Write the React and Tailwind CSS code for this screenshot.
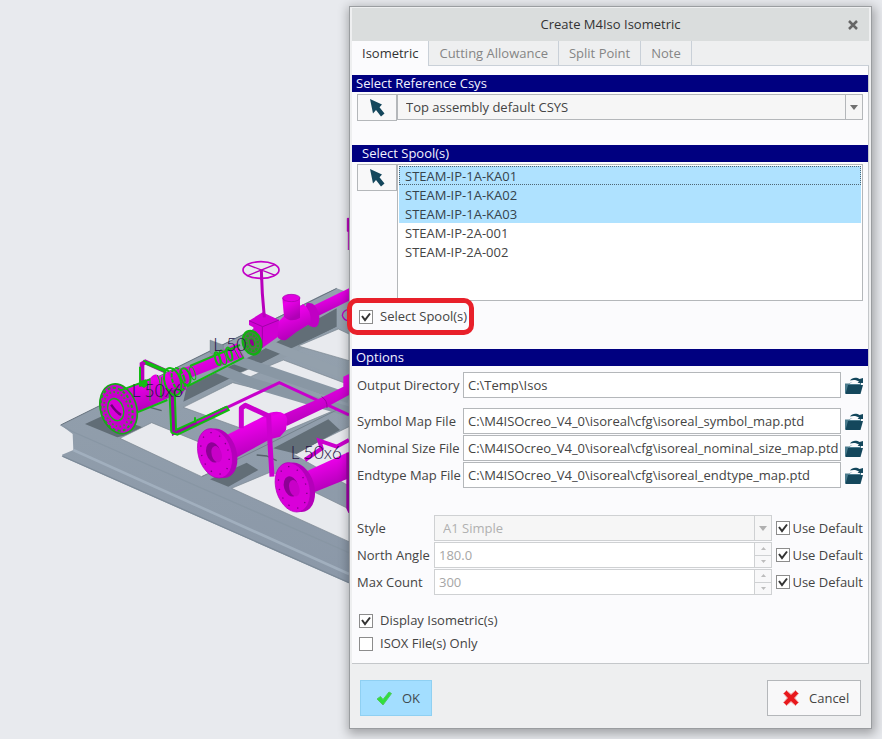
import React, { useState } from "react";

const FONT = "font-['Open_Sans','Noto_Sans',sans-serif]";

const TABS = ["Isometric", "Cutting Allowance", "Split Point", "Note"];

const SPOOLS = ["STEAM-IP-1A-KA01", "STEAM-IP-1A-KA02", "STEAM-IP-1A-KA03", "STEAM-IP-2A-001", "STEAM-IP-2A-002"];

const MAP_FILES = [
  { id: "symbol", label: "Symbol Map File", value: "C:\\M4ISOcreo_V4_0\\isoreal\\cfg\\isoreal_symbol_map.ptd" },
  { id: "nominal", label: "Nominal Size File", value: "C:\\M4ISOcreo_V4_0\\isoreal\\cfg\\isoreal_nominal_size_map.ptd" },
  { id: "endtype", label: "Endtype Map File", value: "C:\\M4ISOcreo_V4_0\\isoreal\\cfg\\isoreal_endtype_map.ptd" },
];

function ArrowIcon() {
  return (
    <svg width="15" height="18" viewBox="0 0 15 18" fill="#14475c" aria-hidden="true">
      <path d="M0 0l12 5.500-2.500 2.800 5 6.200-3.500 3-5-6.500-3 3.500z" />
    </svg>
  );
}

function FolderIcon() {
  return (
    <svg width="18" height="17" viewBox="0 0 18 17" aria-hidden="true">
      <path d="M0 6.500h4.500L6 5h10v3L4 9 1.500 16.500H0z" fill="#4c7c8e" />
      <path d="M5.500 5.500L14 3.500l1 3.500H5z" fill="#fbfbfd" />
      <path d="M3 8h15l-2.500 9H0.500z" fill="#14475c" />
      <path d="M5 3.500C7 0 12 0 14.500 2L18 1v5h-5.500l1.500-1.500C12 2.800 8 2.500 5 3.500z" fill="#14475c" />
    </svg>
  );
}

function Triangle({ up, className }) {
  return (
    <svg width="8" height="5" viewBox="0 0 8 5" fill="currentColor" className={className} aria-hidden="true">
      <path d={up ? "M0 5h8L4 0z" : "M0 0h8L4 5z"} />
    </svg>
  );
}

function Check({ label, defaultChecked, gap }) {
  return (
    <label className={`flex items-center whitespace-nowrap ${gap}`}>
      <span className="grid shrink-0">
        <input type="checkbox" defaultChecked={defaultChecked} className="peer col-start-1 row-start-1 size-[14px] appearance-none border border-[#8c8c8c] bg-white" />
        <svg viewBox="0 0 14 14" className="pointer-events-none invisible col-start-1 row-start-1 size-[14px] peer-checked:visible" aria-hidden="true">
          <path d="M3 6L6 10L11 3.500" fill="none" stroke="#333" strokeWidth="2" />
        </svg>
      </span>
      <span>{label}</span>
    </label>
  );
}

function SectionBar({ children, className = "px-1" }) {
  return <h2 className={`h-[17px] bg-[#000080] leading-[17px] text-[#f2f2ff] ${className}`}>{children}</h2>;
}

function PickButton({ label }) {
  return (
    <button type="button" aria-label={label} className="flex h-[27px] w-10 shrink-0 items-center justify-center border border-[#b4b7ba] bg-[#f8f8f9]">
      <ArrowIcon />
    </button>
  );
}

function FileRow({ id, label, value }) {
  return (
    <div className="flex items-center">
      <label htmlFor={id} className="w-[106px] shrink-0 whitespace-nowrap">{label}</label>
      <input id={id} type="text" defaultValue={value} className="h-[26px] min-w-0 flex-1 border border-[#b4b7ba] bg-white pl-1 outline-none" />
      <button type="button" aria-label={`Browse ${label}`} className="ml-1 shrink-0"><FolderIcon /></button>
    </div>
  );
}

function NumberRow({ id, label, value }) {
  return (
    <div className="flex items-center">
      <label htmlFor={id} className="w-[77px] shrink-0 whitespace-nowrap">{label}</label>
      <div className="flex h-[26px] min-w-0 flex-1 border border-[#cfd1d3] bg-white">
        <input id={id} type="text" disabled defaultValue={value} className="min-w-0 flex-1 px-1 text-[#a6a6a6]" />
        <div className="flex w-[17px] flex-col divide-y divide-[#cfd1d3] border-l border-[#cfd1d3] bg-[#f8f8f9] text-[#bdbdbd]">
          <button type="button" disabled aria-label={`Increase ${label}`} className="flex flex-1 items-center justify-center"><Triangle up className="w-[5px]" /></button>
          <button type="button" disabled aria-label={`Decrease ${label}`} className="flex flex-1 items-center justify-center"><Triangle className="w-[5px]" /></button>
        </div>
      </div>
      <div className="ml-1"><Check label="Use Default" defaultChecked gap="gap-[2px]" /></div>
    </div>
  );
}

// Flange seen at an angle: rim, face, bore and bolt holes
function Flange({ x, y }) {
  return (
    <g transform={`translate(${x} ${y}) rotate(-17)`}>
      <ellipse cx="14" cy="4" rx="50" ry="76" fill="#b400ba" />
      <ellipse rx="50" ry="76" fill="#d900d9" stroke="#b000b8" strokeWidth="2" />
      <ellipse rx="40" ry="64" fill="none" stroke="#7a0084" strokeWidth="4" strokeDasharray="4 24" />
      <ellipse cx="-4" cy="-4" rx="21" ry="31" fill="#8e0096" />
      <ellipse cx="4" cy="4" rx="15" ry="25" fill="#c800c8" />
    </g>
  );
}

function PipeRack() {
  return (
    <svg width="349" height="739" viewBox="-120 -1140 1047 2217" className="block" role="img" aria-label="Pipe rack model">
      <defs>
        <linearGradient id="pipe" x1="0" y1="0" x2="0.400" y2="1">
          <stop offset="0" stopColor="#b400ba" />
          <stop offset="0.350" stopColor="#ec00ea" />
          <stop offset="1" stopColor="#b000b6" />
        </linearGradient>
        <linearGradient id="web" x1="0" y1="0" x2="0" y2="1">
          <stop offset="0" stopColor="#95a2ae" />
          <stop offset="1" stopColor="#8b98a8" />
        </linearGradient>
      </defs>

      {/* steel frame */}
      <path d="M62 135L845-255L890-275L927-262V610L70 232L66 224L100 210L98 162z" fill="url(#web)" />
      <path d="M62 135L890-275" stroke="#66727d" strokeWidth="3" />
      <path d="M62 135L100 156L927 518" fill="none" stroke="#8896a4" strokeWidth="4" />
      <path d="M100 210L927 582" stroke="#a1afbe" strokeWidth="8" />
      <path d="M66 228L927 608" stroke="#7c8a98" strokeWidth="4" />
      <path d="M135 132L200 102L330 150L232 172z" fill="#616d76" />
      <path d="M440 20L640-75L890-215V-160L750-90L590-15L430 65z" fill="#626e77" />
      <path d="M385 100L740-80L895-152" fill="none" stroke="#909da9" strokeWidth="16" />

      {/* openings between the beams */}
      <g fill="#e8eaee" stroke="#788590" strokeWidth="2">
        <path d="M240 175L335 128L570 224V255L485 290z" />
        <path d="M430 82L578 8L890 88L700 168L640 158z" />
        <path d="M592-18L642-40L668-26L632-10z" />
        <path d="M660-31L730-60L927 14V50L842 40z" />
        <path d="M775-102L895-153L927-138V-58z" />
        <path d="M760 222L927 140V318z" />
        <path d="M575 325L692 276L720 286L927 387V485z" />
      </g>
      <path d="M520-40L640 10L927 95" fill="none" stroke="#8997a4" strokeWidth="30" />
      <path d="M575-65L927 55" stroke="#8997a4" strokeWidth="30" />
      <path d="M680-110L927-10" stroke="#93a0ac" strokeWidth="28" />
      <path d="M510-120L550-105V-60L510-82z" fill="#8492a0" stroke="#66727d" />
      <path d="M700 205L865 118L900 150L770 222z" fill="#626e77" />
      <path d="M510 298L620 248L655 270L565 320z" fill="#626e77" />
      <path d="M485 290L690 190L890 90" fill="none" stroke="#75828d" strokeWidth="3" />
      <path d="M330 82L365 92M650 225L680 228L710 242" fill="none" stroke="#56626b" strokeWidth="4" />

      {/* rear line with gate valve */}
      <path d="M818-222L927-275V-238L830-190z" fill="url(#pipe)" />
      <path d="M800-230q28-8 38 40q2 32-18 32q-26-6-30-40z" fill="#c000c4" />
      <path d="M715-175L735-195L790-228Q815-210 812-170L770-145L738-120Q712-115 706-145z" fill="url(#pipe)" />
      <path d="M727-246Q754-266 780-246V-186Q752-170 732-190z" fill="url(#pipe)" />
      <ellipse cx="754" cy="-246" rx="26" ry="11" fill="#e000e0" stroke="#a000a8" strokeWidth="2" />
      <path d="M627-178L668-203L717-180L712-128L667-96L640-140V-158L627-165z" fill="#d000d2" />
      <path d="M627-178L668-160L717-180M667-160V-96" fill="none" stroke="#a000a8" strokeWidth="3" />
      <path d="M664-330L667-260L673-188" fill="none" stroke="#b800bc" strokeWidth="9" />
      <ellipse cx="663" cy="-330" rx="54" ry="25" fill="none" stroke="#c400c8" strokeWidth="5" />
      <path d="M620-347L706-314M706-347L620-312M663-330V-300" stroke="#b800bc" strokeWidth="4" />
      <path d="M927-485H922V-446H927zM925-446V-390" fill="#b800bc" stroke="#b800bc" strokeWidth="3" />
      <path d="M927-212q-18 2-20 18q4 16 20 16" fill="none" stroke="#b800bc" strokeWidth="4" />

      {/* selected spool */}
      <path d="M240 32L330-5Q345-25 360-10L400-30L440 28L290 98z" fill="url(#pipe)" />
      <path d="M380-25L450-42L590-110L612-70L455-8L425 45z" fill="url(#pipe)" />
      <path d="M306 20V-48L316-54L378-26" fill="none" stroke="#b800bc" strokeWidth="14" />
      <path d="M396 30L402 158L470 128L560 84" fill="none" stroke="#a000a8" strokeWidth="13" />
      <path d="M470 126L718 8L927 105" fill="none" stroke="#c800cc" strokeWidth="9" />
      <g transform="translate(230 88) rotate(-17)">
        <ellipse cx="6" rx="54" ry="76" fill="#c800cc" stroke="#18a818" strokeWidth="5" />
        <ellipse rx="46" ry="66" fill="none" stroke="#1fa81f" strokeWidth="6" strokeDasharray="9 7" />
        <ellipse rx="36" ry="53" fill="none" stroke="#4b8a3c" strokeWidth="6" strokeDasharray="5 7" />
        <ellipse cx="-3" rx="23" ry="34" fill="#d800d8" stroke="#14b814" strokeWidth="4" />
        <path d="M-12-18Q-3 10 8 20" stroke="#70007a" strokeWidth="7" fill="none" />
      </g>
      <g fill="none" stroke="#12bb12" strokeWidth="6">
        <path d="M240 32L330-2M290 98L382 60M450-42L600-105M440 20L612-68M300-40V20M316-50L378-24M310-58L388-26" />
        <path d="M388 28L394 158M404 28L408 150L560 80L566 90L412 164L394 158M465 112V128" />
        <path d="M330-5V62M365-8V55M352-15q15 30 8 70" strokeWidth="3" />
        <ellipse cx="398" cy="5" rx="24" ry="42" transform="rotate(-17 398 5)" />
        <ellipse cx="415" cy="-2" rx="18" ry="35" transform="rotate(-17 415 -2)" strokeDasharray="12 4" />
        <ellipse cx="436" cy="-10" rx="14" ry="26" transform="rotate(-17 436 -10)" />
        <ellipse cx="458" cy="-20" rx="7" ry="20" transform="rotate(-17 458 -20)" strokeWidth="3" />
        <ellipse cx="533" cy="-64" rx="7" ry="20" transform="rotate(-17 533 -64)" />
        <ellipse cx="549" cy="-68" rx="9" ry="23" transform="rotate(-17 549 -68)" strokeWidth="3" />
        <ellipse cx="568" cy="-78" rx="7" ry="20" transform="rotate(-17 568 -78)" />
        <path d="M580-98L598-64M592-102L608-70" strokeWidth="3" />
      </g>
      <path d="M303 2L318-2L325 14L312 24L300 16z" fill="#12bb12" />
      <g transform="translate(636 -112) rotate(-17)">
        <ellipse rx="27" ry="36" fill="#567050" stroke="#12b012" strokeWidth="7" />
        <ellipse rx="17" ry="25" fill="none" stroke="#12b012" strokeWidth="7" strokeDasharray="7 4" />
        <ellipse rx="7" ry="12" fill="#90008e" stroke="#12b012" strokeWidth="3" />
      </g>

      {/* middle line */}
      <path d="M725 105L850 50L910 20V-10L927-18V45L862 80L740 138z" fill="url(#pipe)" />
      <path d="M845 50q18 12 16 34" stroke="#9a00a2" strokeWidth="3" fill="none" />
      <path d="M560 165L650 120L690 98Q735 88 742 118L738 150L720 170L690 178L580 238z" fill="url(#pipe)" />
      <path d="M604 145V84L616 76L686 108L690 190L696 290" fill="none" stroke="#cc00ce" strokeWidth="15" strokeLinejoin="round" />
      <Flange x={525} y={220} />

      {/* front line */}
      <path d="M795 240L845 205L838 182L890 200L927 180" fill="none" stroke="#cc00ce" strokeWidth="12" />
      <path d="M790 278L927 215V295L815 340z" fill="url(#pipe)" />
      <path d="M921 220V385L927 398V220z" fill="#a000a8" stroke="#a000a8" strokeWidth="4" />
      <Flange x={758} y={322} />

      <g fill="#241044" fontFamily="Lato, sans-serif" fontWeight="300" fontSize="52">
        <text x="275" y="50">L 50x6</text>
        <text x="752" y="236">L 50x6</text>
        <text x="520" y="-87">L 50</text>
      </g>
    </svg>
  );
}

export default function App() {
  const [tab, setTab] = useState("Isometric");
  const [picked, setPicked] = useState(SPOOLS.slice(0, 3));

  const toggle = (name) => setPicked((prev) => (prev.includes(name) ? prev.filter((n) => n !== name) : [...prev, name]));

  return (
    <main className={`flex min-h-screen items-start overflow-hidden bg-[#e8eaee] text-[13px] leading-[19px] text-[#444] ${FONT}`}>
      <div className="w-[349px] shrink-0">
        <PipeRack />
      </div>

      <div role="dialog" aria-labelledby="dialog-title" className="relative mt-[6px] mr-[10px] min-w-0 flex-1 border border-[#9a9da0] bg-[#eeeff0] px-[2px] pt-px shadow-[1px_3px_10px_2px_rgba(0,0,0,0.3)]">
        <header className="grid h-[33px] grid-cols-[32px_1fr_32px] items-center bg-[#dadddd]">
          <h1 id="dialog-title" className="col-start-2 text-center text-[#333]">Create M4Iso Isometric</h1>
          <button type="button" aria-label="Close" className="flex items-center justify-center">
            <svg width="10" height="10" viewBox="0 0 10 10" stroke="#666" strokeWidth="2.500" aria-hidden="true">
              <path d="M1 1l8 8M9 1l-8 8" />
            </svg>
          </button>
        </header>

        <div role="tablist" className="flex h-[25px] border-b border-[#c9d0d8]">
          {TABS.map((name) => (
            <button key={name} type="button" role="tab" aria-selected={tab === name} onClick={() => setTab(name)}
              className={`h-[25px] border-r border-[#c9d0d8] px-[10px] whitespace-nowrap ${tab === name ? "bg-[#fbfbfd] text-[#333]" : "bg-[#eeeff0] border-b text-[#858585]"}`}>
              {name}
            </button>
          ))}
        </div>

        <div className="border-r border-b border-[#c4c7ca] bg-[#fbfbfd] pt-[9px] pb-[10px]">
          <SectionBar>Select Reference Csys</SectionBar>
          <div className="mt-[2px] flex px-[5px]">
            <PickButton label="Pick coordinate system" />
            <div className="relative h-[26px] min-w-0 flex-1">
              <select aria-label="Reference coordinate system" className="size-full appearance-none border border-[#b4b7ba] bg-[#f6f6f6] pl-2 outline-none">
                <option>Top assembly default CSYS</option>
              </select>
              <span className="pointer-events-none absolute inset-y-px right-px flex w-[17px] items-center justify-center border-l border-[#b4b7ba] text-[#707070]">
                <Triangle />
              </span>
            </div>
          </div>

          <SectionBar className="mt-6 px-[10px]">Select Spool(s)</SectionBar>
          <div className="mt-[2px] flex px-[5px]">
            <PickButton label="Pick spools" />
            <ul role="listbox" aria-label="Spools" aria-multiselectable="true" className="h-[137px] flex-1 border border-[#b4b7ba] bg-white p-px">
              {SPOOLS.map((name, i) => (
                <li key={name} role="option" aria-selected={picked.includes(name)} onClick={() => toggle(name)}
                  className={`h-[19px] border border-dotted px-[5px] leading-[18px] ${i === 0 ? "border-[#4f6674]" : "border-transparent"} ${picked.includes(name) ? "bg-[#afe2ff] text-[#35434c]" : ""}`}>
                  {name}
                </li>
              ))}
            </ul>
          </div>

          <div className="relative mt-[6px] ml-[7px] w-fit">
            <Check label="Select Spool(s)" defaultChecked gap="gap-[7px]" />
            <span className="pointer-events-none absolute -top-[9px] -right-[7px] -bottom-[9px] -left-[12px] rounded-[10px] border-[5px] border-[#e8202a]" />
          </div>

          <SectionBar className="mt-[23px] px-1">Options</SectionBar>
          <div className="mt-[6px] px-[5px]">
            <FileRow id="output" label="Output Directory" value="C:\Temp\Isos" />
            <div className="mt-[10px] flex flex-col gap-px">
              {MAP_FILES.map((f) => <FileRow key={f.id} {...f} />)}
            </div>

            <div className="mt-[27px] flex flex-col gap-px">
              <div className="flex items-center">
                <label htmlFor="style" className="w-[77px] shrink-0">Style</label>
                <div className="relative h-[26px] min-w-0 flex-1">
                  <select id="style" disabled className="size-full appearance-none border border-[#cfd1d3] bg-[#f6f6f6] pl-2 text-[#b0b0b0] disabled:opacity-100">
                    <option>A1 Simple</option>
                  </select>
                  <span className="pointer-events-none absolute inset-y-px right-px flex w-[17px] items-center justify-center border-l border-[#cfd1d3] text-[#b0b0b0]">
                    <Triangle />
                  </span>
                </div>
                <div className="ml-1"><Check label="Use Default" defaultChecked gap="gap-[2px]" /></div>
              </div>
              <NumberRow id="north" label="North Angle" value="180.0" />
              <NumberRow id="count" label="Max Count" value="300" />
            </div>
          </div>

          <div className="mt-4 ml-[7px] flex flex-col items-start gap-1">
            <Check label="Display Isometric(s)" defaultChecked gap="gap-[7px]" />
            <Check label="ISOX File(s) Only" gap="gap-[7px]" />
          </div>
        </div>

        <footer className="flex justify-between px-2 pt-4 pb-3">
          <button type="button" className="flex h-9 w-[72px] items-center gap-[10px] border border-[#8fd0f2] bg-[#a3deff] pl-[15px] text-[#3f4a50]">
            <svg width="16" height="16" viewBox="0 0 16 16" aria-hidden="true">
              <path d="M1 9l3.500-2.500L7 9.500 13 2l2.500 1.500L7 15z" fill="#2fe03c" stroke="#52c860" />
            </svg>
            OK
          </button>
          <button type="button" className="flex h-9 w-[94px] items-center gap-[9px] border border-[#b4b7ba] bg-[#f8f8f9] pl-[14px]">
            <svg width="18" height="18" viewBox="0 0 18 18" aria-hidden="true">
              <path d="M4.500 1.500L9 5.500l4.500-4 3 3L12.500 9l4 4.500-3 3L9 12.500l-4.500 4-3-3L5.500 9l-4-4.500z" fill="#e8181c" stroke="#f09090" />
            </svg>
            Cancel
          </button>
        </footer>
      </div>
    </main>
  );
}
